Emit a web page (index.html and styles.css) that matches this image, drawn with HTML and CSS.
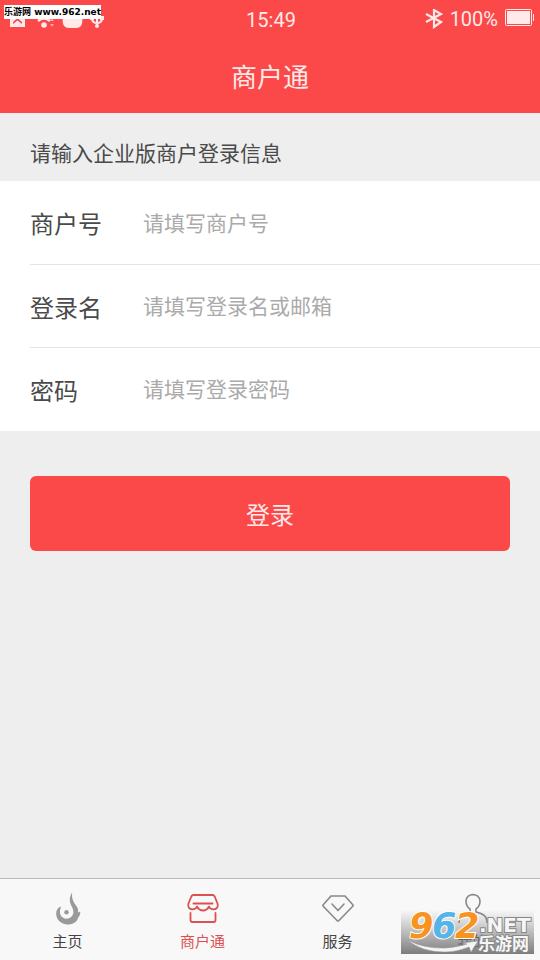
FILE: index.html
```html
<!DOCTYPE html>
<html lang="zh-CN">
<head>
<meta charset="utf-8">
<meta name="viewport" content="width=device-width, initial-scale=1">
<title>商户通</title>
<link rel="stylesheet" href="styles.css">
</head>
<body>
<header class="header">
  <div class="status">
    <div class="status-left">
      <svg width="96" height="20" viewBox="0 0 96 20" fill="#ffe9e9" aria-hidden="true">
        <path fill-rule="evenodd" d="M2 1h15v14H2zM5 10l4.500-4 4.500 4v2l-4.500-3.500L5 12z"/>
        <path d="M30 9q6-5 12 0" fill="none" stroke="#ffe9e9" stroke-width="2.500"/>
        <circle cx="36" cy="13" r="2.800"/>
        <path d="M42 9l2-3 2 3zM42 12h4l-2 3z" opacity=".6"/>
        <path d="M55 4h19q2 12-6 12h-7q-8 0-6-12z"/>
        <path d="M89 3v12M84 6q0 5 5 5q5 0 5-5" fill="none" stroke="#ffe9e9" stroke-width="2"/>
        <circle cx="89" cy="14" r="2"/><path d="M82 4h4v4h-4zM92 4h4v4h-4z"/>
      </svg>
    </div>
    <time class="clock">15:49</time>
    <div class="status-right">
      <svg width="18" height="20" viewBox="0 0 18 20" fill="none" stroke="#ffe9e9" stroke-width="2.200" aria-hidden="true"><path d="M1 5l15 8-7 5V1L16 5 1 13"/></svg>
      <span>100%</span>
      <svg width="29" height="20" viewBox="0 0 29 20" aria-hidden="true"><rect x=".5" y=".5" width="26" height="16" rx="1" fill="none" stroke="#ffe9e9"/><path fill="#ffe9e9" d="M2 2h23v13H2zM28 5h1v7h-1z"/></svg>
    </div>
  </div>
  <h1 class="title">商户通</h1>
  <div class="site-tag">乐游网 www.962.net</div>
</header>
<main class="main">
  <form class="form">
    <p class="hint">请输入企业版商户登录信息</p>
    <div class="fields">
      <div class="field"><label for="merchant">商户号</label><input id="merchant" type="text" placeholder="请填写商户号"></div>
      <div class="field"><label for="login">登录名</label><input id="login" type="text" placeholder="请填写登录名或邮箱"></div>
      <div class="field"><label for="password">密码</label><input id="password" type="password" placeholder="请填写登录密码"></div>
    </div>
    <button class="submit" type="submit">登录</button>
  </form>
</main>
<footer class="footer">
  <nav class="tabs">
    <a class="tab" href="#home">
      <svg width="36" height="36" viewBox="0 0 36 36" aria-hidden="true"><path fill="#999" d="M22.200 2.300C21.500 8 23 11.500 26 15.500C28 18 28.500 20 28 22.500L30.300 21.500C30.500 24 29.500 26 28 28C27 32 22.500 34.700 17.500 34.500C11 34.200 6.300 29.500 6.200 24C6.100 20 7.800 17.500 11 16.500L10.500 18.500C8.500 24 11.500 28.500 16.500 28.700C21 28.700 23.800 25 23.300 21C22.800 17.500 20.800 15.500 20 12C19.300 8.500 20.500 5 22.200 2.300z"/><circle cx="16.500" cy="22.300" r="2.200" fill="#999"/></svg>
      <span>主页</span>
    </a>
    <a class="tab active" href="#merchant-tab" aria-current="page">
      <svg width="36" height="36" viewBox="0 0 36 36" fill="none" stroke="#dc5050" stroke-width="1.800" stroke-linejoin="round" stroke-linecap="round" aria-hidden="true"><path d="M8.500 5h19q1.500 0 2.200 1.500l3 7.500q.8 5-4.200 5.300-3.500 0-4.500-2.800-2 4-6 4t-6-4q-1 2.800-4.500 2.800Q2.500 19 3.300 14l3-7.500Q7 5 8.500 5zM8.500 13.500h19M5.500 23v7q0 2 2 2h21q2 0 2-2v-7"/></svg>
      <span>商户通</span>
    </a>
    <a class="tab" href="#service">
      <svg width="36" height="36" viewBox="0 0 36 36" fill="none" stroke="#888" stroke-width="1.600" stroke-linejoin="round" stroke-linecap="round" aria-hidden="true"><path d="M11 6h14l8 9v1L18.500 31h-1L3 16v-1l8-9zM12 14l6 6.500 6-6.500"/></svg>
      <span>服务</span>
    </a>
    <a class="tab" href="#mine">
      <svg width="36" height="36" viewBox="0 0 36 36" fill="none" stroke="#888" stroke-width="1.600" aria-hidden="true"><path d="M4 33C4 26 8 23.500 15 22V19C12 17 11 13.500 11 11C11.500 2.500 24.500 2.500 25 11C25 13.500 24 17 21 19V22C28 23.500 32 26 32 33"/></svg>
      <span>我的</span>
    </a>
  </nav>
  <div class="watermark">
    <svg width="133" height="44" viewBox="0 0 133 44" role="img" aria-label="962.NET 乐游网">
      <defs><linearGradient id="shade" x1="0" y1="0" x2="0" y2="1"><stop offset="0" stop-color="#808080" stop-opacity="0"/><stop offset="1" stop-color="#767676" stop-opacity=".95"/></linearGradient></defs>
      <path d="M0 0h133v44H0z" fill="url(#shade)"/>
      <path d="M7 30Q23 39 45 38Q57 37 66 34L61 33L77 31L70 42L68 37Q56 42 44 42Q20 42 7 30z" fill="#f4f4f4" stroke="#999" stroke-width=".5"/>
      <g class="wm-number"><text x="8" y="28" fill="#f7931e">9</text><text x="31" y="28" fill="#56b4e8">6</text><text x="54" y="28" fill="#f7931e">2</text></g>
      <text class="wm-net" x="78" y="22">.NET</text>
      <text class="wm-name" x="77" y="40">乐游网</text>
    </svg>
  </div>
</footer>
</body>
</html>
```
FILE: styles.css
```css
* { box-sizing: border-box; }

body {
  display: flex;
  flex-direction: column;
  min-height: 100vh;
  margin: 0;
  background: #eee;
  color: #4a4a4a;
  font-family: "Noto Sans CJK SC", sans-serif;
  font-weight: 400;
}

.header {
  position: relative;
  background: #fb4848;
  color: #ffe9e9;
}

.status {
  display: grid;
  grid-template-columns: 1fr auto 1fr;
  align-items: center;
  height: 40px;
  padding: 0 6px 0 8px;
  font-family: Roboto, sans-serif;
  font-size: 20px;
}

.status svg { display: block; }

.status-left { padding-top: 4px; }

.status-right {
  display: flex;
  justify-content: flex-end;
  align-items: center;
  gap: 7px;
  padding-bottom: 2px;
}

.title {
  margin: 0;
  padding-bottom: 1px;
  line-height: 72px;
  font-size: 26px;
  font-weight: 400;
  text-align: center;
}

.site-tag {
  position: absolute;
  top: 5px;
  left: 4px;
  background: #fff;
  color: #000;
  font: 700 9px/14px "DejaVu Sans", "Noto Sans CJK SC", sans-serif;
}

.main { flex: 1; }

.hint {
  margin: 0;
  padding: 12px 30px 0;
  height: 68px;
  line-height: 54px;
  font-size: 21px;
}

.fields {
  padding: 0 0 1px 30px;
  background: #fff;
}

.field {
  display: flex;
  align-items: center;
  height: 83px;
}

.field + .field { border-top: 1px solid #e4e4e4; }

.field label {
  width: 113px;
  font-size: 24px;
}

.field input {
  flex: 1;
  min-width: 0;
  padding: 0 0 2px;
  border: 0;
  outline: 0;
  background: none;
  color: #444;
  font: inherit;
  font-size: 21px;
}

.field input::placeholder {
  color: #aaa;
  opacity: 1;
}

.submit {
  display: block;
  width: calc(100% - 60px);
  height: 75px;
  margin: 45px 30px;
  border: 0;
  border-radius: 6px;
  background: #fb4848;
  color: #ffe9e9;
  font: inherit;
  font-size: 24px;
}

.footer {
  position: relative;
  border-top: 1px solid #b8b8b8;
  background: #f8f8f8;
}

.tabs {
  display: grid;
  grid-template-columns: repeat(4, 1fr);
}

.tab {
  display: flex;
  flex-direction: column;
  align-items: center;
  height: 81px;
  padding-top: 11px;
  color: #444;
  font-size: 15px;
  line-height: 30px;
  text-decoration: none;
}

.tab.active { color: #dc5050; }

.watermark {
  position: absolute;
  right: 6px;
  bottom: 6px;
}

.watermark svg { display: block; }

.wm-number {
  font: italic 700 35px "DejaVu Sans", sans-serif;
  stroke: #fff;
  stroke-width: 2px;
  paint-order: stroke;
}

.wm-net,
.wm-name {
  fill: #f6f6f6;
  stroke: #888;
  stroke-width: 2px;
  paint-order: stroke;
}

.wm-net { font: 700 20px "DejaVu Sans", sans-serif; }

.wm-name { font: 700 17px "Noto Sans CJK SC", sans-serif; }
```
